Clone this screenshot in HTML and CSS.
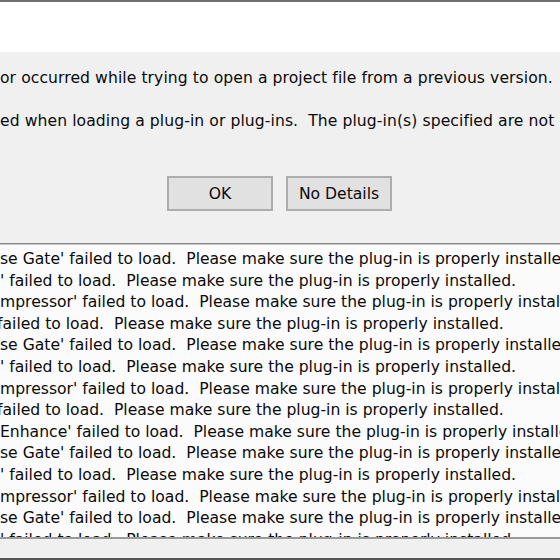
FILE: index.html
```html
<!DOCTYPE html>
<html>
<head>
<meta charset="utf-8">
<link rel="stylesheet" href="styles.css">
</head>
<body>
<div class="window">
  <div class="topline"></div>
  <div class="header"></div>
  <div class="panel">
    <p class="msg msg-first">or occurred while trying to open a project file from a previous version.</p>
    <p class="msg msg-second">ed when loading a plug-in or plug-ins.&nbsp; The plug-in(s) specified are not installed.</p>
    <div class="buttons">
      <button class="btn">OK</button>
      <button class="btn">No Details</button>
    </div>
    <div class="list">
      <div class="row">se Gate' failed to load.&nbsp; Please make sure the plug-in is properly installed.</div>
      <div class="row">' failed to load.&nbsp; Please make sure the plug-in is properly installed.</div>
      <div class="row">mpressor' failed to load.&nbsp; Please make sure the plug-in is properly installed.</div>
      <div class="row cut">failed to load.&nbsp; Please make sure the plug-in is properly installed.</div>
      <div class="row">se Gate' failed to load.&nbsp; Please make sure the plug-in is properly installed.</div>
      <div class="row">' failed to load.&nbsp; Please make sure the plug-in is properly installed.</div>
      <div class="row">mpressor' failed to load.&nbsp; Please make sure the plug-in is properly installed.</div>
      <div class="row cut">failed to load.&nbsp; Please make sure the plug-in is properly installed.</div>
      <div class="row">Enhance' failed to load.&nbsp; Please make sure the plug-in is properly installed.</div>
      <div class="row">se Gate' failed to load.&nbsp; Please make sure the plug-in is properly installed.</div>
      <div class="row">' failed to load.&nbsp; Please make sure the plug-in is properly installed.</div>
      <div class="row">mpressor' failed to load.&nbsp; Please make sure the plug-in is properly installed.</div>
      <div class="row">se Gate' failed to load.&nbsp; Please make sure the plug-in is properly installed.</div>
      <div class="row">' failed to load.&nbsp; Please make sure the plug-in is properly installed.</div>
    </div>
  </div>
  <div class="bottomline"></div>
</div>
</body>
</html>
```
FILE: styles.css
```css
html, body {
  margin: 0;
  padding: 0;
  width: 560px;
  height: 560px;
  overflow: hidden;
  background: #f0f0f0;
}
.window {
  width: 560px;
  height: 560px;
  display: flex;
  flex-direction: column;
  overflow: hidden;
  font-family: "DejaVu Sans", sans-serif;
  color: #0a0a0a;
}
.topline {
  height: 2px;
  background: #707070;
  flex: none;
}
.header {
  height: 50px;
  background: #ffffff;
  flex: none;
}
.panel {
  flex: 1;
  background: #f0f0f0;
  display: flex;
  flex-direction: column;
  min-height: 0;
}
.msg {
  margin: 0;
  white-space: nowrap;
  font-size: 15.6px;
  letter-spacing: 0.08px;
  line-height: 20px;
  padding-left: 0;
}
.msg-first {
  margin-top: 16px;
}
.msg-second {
  margin-top: 23px;
}
.buttons {
  display: flex;
  gap: 13px;
  padding-left: 167px;
  margin-top: 45px;
}
.btn {
  width: 106px;
  height: 35px;
  background: #e1e1e1;
  border: 2px solid #adadad;
  font-family: inherit;
  font-size: 15.6px;
  color: #0a0a0a;
  padding: 0;
}
.list {
  margin-top: 32px;
  border-top: 1px solid #8a8a8a;
  box-shadow: inset 0 1px 0 #c8c8c8;
  border-bottom: 2px solid #9a9a9a;
  background: #fbfbfb;
  height: 296px;
  overflow: hidden;
  padding-top: 5px;
  box-sizing: border-box;
  flex: none;
}
.row {
  white-space: nowrap;
  font-size: 15.6px;
  line-height: 21.6px;
  padding-left: 0;
}
.row.cut {
  text-indent: -3px;
}
.bottomline {
  height: 2px;
  background: #555;
  flex: none;
}
```
